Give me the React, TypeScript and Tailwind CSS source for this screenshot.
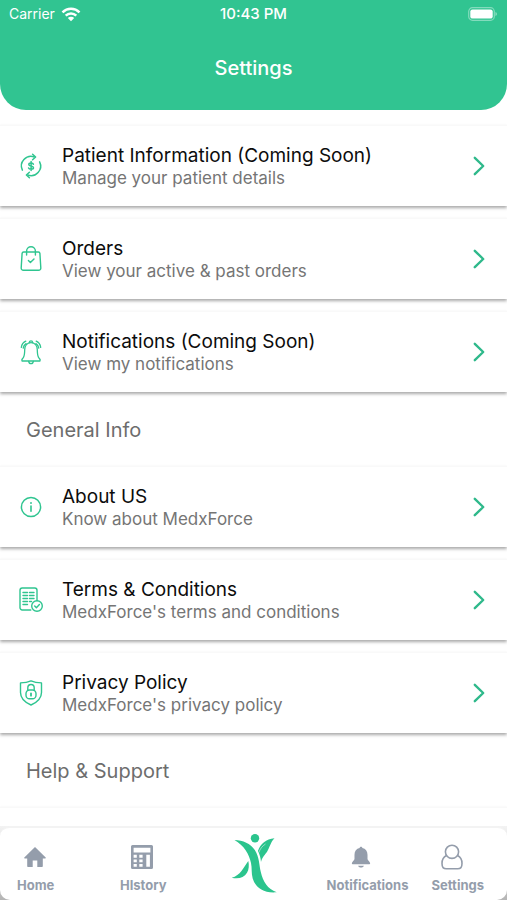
import React from 'react';

type IconProps = { className?: string };

const stroke = {
  fill: 'none',
  stroke: 'currentColor',
  strokeLinecap: 'round' as const,
  strokeLinejoin: 'round' as const,
};

const RefundIcon: React.FC<IconProps> = ({ className }) => (
  <svg viewBox="0 0 26 26" className={className} strokeWidth="1.5" {...stroke} aria-hidden="true">
    <path d="M4.4 17.2A9.6 9.6 0 0 1 16.4 4" />
    <path d="M14.6 1.2 17.6 4l-3 2.8" />
    <path d="M21.6 8.8A9.6 9.6 0 0 1 9.6 22" />
    <path d="M11.4 19.2 8.4 22l3 2.8" />
    <path d="M15.4 11.2c-.2-.8-1-1.300-2.300-1.300-1.400 0-2.300.5-2.300 1.500 0 2.300 4.700 1 4.700 3.300 0 1-.9 1.500-2.400 1.500-1.300 0-2.200-.4-2.500-1.300M13.100 8.600v8.900" />
  </svg>
);

const BagIcon: React.FC<IconProps> = ({ className }) => (
  <svg viewBox="0 0 26 26" className={className} strokeWidth="1.4" {...stroke} aria-hidden="true">
    <path d="M5.600 6h14.800c.9 0 1.400.5 1.500 1.300l.9 14.400c.1 1.600-.8 2.600-2.300 2.600H5.500c-1.500 0-2.400-1-2.300-2.600L4.100 7.300C4.200 6.500 4.700 6 5.600 6Z" />
    <path d="M8.600 9V5.200a4.400 4.400 0 0 1 8.800 0V9" />
    <path d="m10.400 14.600 2 2 3.600-3.700" />
  </svg>
);

const BellOutlineIcon: React.FC<IconProps> = ({ className }) => (
  <svg viewBox="0 0 26 26" className={className} strokeWidth="1.3" {...stroke} aria-hidden="true">
    <path d="M4 22c-.8-1.500.3-2 1.200-3.200C6.700 17 6.600 14.400 6.700 10.800 6.800 6.500 9.300 3.600 13 3.600s6.200 2.900 6.300 7.200c.1 3.600 0 6.200 1.500 8 .9 1.200 2 1.700 1.200 3.200Z" />
    <path d="M10.700 22.300c.2 1.500 1 2.300 2.300 2.300s2.100-.8 2.300-2.300M11.400 3.600c0-2.300 3.200-2.300 3.200 0" />
    <path d="M3.300 8.300C3.800 5.500 5.400 3.200 7.800 2.200M5.200 9.200c.3-2 1.300-3.700 2.900-4.600M22.700 8.300c-.5-2.800-2.100-5.100-4.500-6.100M20.800 9.200c-.3-2-1.300-3.700-2.900-4.600" />
  </svg>
);

const InfoIcon: React.FC<IconProps> = ({ className }) => (
  <svg viewBox="0 0 26 26" className={className} strokeWidth="1.5" {...stroke} aria-hidden="true">
    <circle cx="13" cy="13" r="9.600" />
    <path d="M13 12v5.300" strokeWidth="1.600" />
    <path d="M13 9v.1" strokeWidth="1.900" />
  </svg>
);

const TermsIcon: React.FC<IconProps> = ({ className }) => (
  <svg viewBox="0 0 26 26" className={className} strokeWidth="1.4" {...stroke} aria-hidden="true">
    <path d="M12.800 23H4.200A2.200 2.200 0 0 1 2 20.800V3.200A2.200 2.200 0 0 1 4.200 1h12.600A2.200 2.200 0 0 1 19 3.200v10.300" />
    <circle cx="19" cy="19" r="5.300" />
    <path d="m16.700 19.100 1.700 1.700 3-3.200" />
    <path d="M5 5.500h4.500M11.500 5.500H16M5 8.500h4.500M11.500 8.500H16M5 11.500h4.500M11.500 11.500H16M5 14.500h4.500M11.500 14.500h2M5 17.500h4.500" />
  </svg>
);

const ShieldIcon: React.FC<IconProps> = ({ className }) => (
  <svg viewBox="0 0 26 26" className={className} strokeWidth="1.4" {...stroke} aria-hidden="true">
    <path d="M13 .9c2.800 1.300 6.100 2 10.500 2v9.600c0 6-4.500 9.900-10.500 12.500C7 22.400 2.500 18.500 2.500 12.500V2.900c4.400 0 7.700-.7 10.500-2Z" />
    <path d="M9.800 10.200V7.700a3.200 3.200 0 0 1 6.400 0v2.500" />
    <rect x="8" y="10" width="10" height="8.800" rx="3.600" />
    <path d="M13 13.400v2.300" strokeWidth="1.800" />
  </svg>
);

const HomeIcon: React.FC<IconProps> = ({ className }) => (
  <svg viewBox="0 0 22 22" className={className} fill="currentColor" aria-hidden="true">
    <path d="M11 1 .3 11.500c-.3.4-.1.900.4.900h2.500V20c0 .6.400 1 1 1h4.500v-6.500h4.600V21h4.500c.6 0 1-.4 1-1v-7.600h2.500c.5 0 .7-.5.400-.9Z" />
  </svg>
);

const HistoryIcon: React.FC<IconProps> = ({ className }) => (
  <svg viewBox="0 0 24 26" className={className} fill="currentColor" aria-hidden="true">
    <path
      fillRule="evenodd"
      d="M2.500 1h19A1.500 1.500 0 0 1 23 2.500v21a1.500 1.500 0 0 1-1.500 1.500h-19A1.500 1.500 0 0 1 1 23.500v-21A1.500 1.500 0 0 1 2.500 1ZM3.600 3.800v4.700h16.800V3.800ZM3.600 10.800v3h3.200v-3ZM9.300 10.800v3h3.300v-3ZM3.600 15.500v2.800h3.200v-2.800ZM9.300 15.500v2.800h3.300v-2.800ZM3.600 20v2.700h3.200V20ZM9.300 20v2.700h3.300V20ZM16.300 10.800v11.900h3.600V10.800Z"
    />
  </svg>
);

const BellIcon: React.FC<IconProps> = ({ className }) => (
  <svg viewBox="0 0 24 24" className={className} fill="currentColor" aria-hidden="true">
    <path d="M12 .8c.9 0 1.500.6 1.500 1.500 3.500.8 5.600 3.500 5.600 7.200v4.800c0 1.400 2.900 3.200 2.900 4.700 0 .5-.3.800-.8.800H2.800c-.5 0-.8-.3-.8-.8 0-1.500 2.900-3.300 2.900-4.700V9.500c0-3.700 2.100-6.400 5.600-7.200 0-.9.600-1.500 1.500-1.500ZM8.800 21.500h6.400c-.4 1.300-1.600 2-3.200 2s-2.800-.7-3.200-2Z" />
  </svg>
);

const UserIcon: React.FC<IconProps> = ({ className }) => (
  <svg viewBox="0 0 22 26" className={className} strokeWidth="1.600" {...stroke} aria-hidden="true">
    <circle cx="11" cy="7.800" r="6.600" />
    <path d="M5.400 11.500C2.600 13 1 15.800 1 19.400c0 3.500 1.600 5.400 4.300 5.400h11.400c2.700 0 4.300-1.900 4.300-5.400 0-3.600-1.600-6.400-4.400-7.900" />
  </svg>
);

const Logo: React.FC<IconProps> = ({ className }) => (
  <svg viewBox="0 0 46 60" className={className} fill="#2bc48d" aria-hidden="true">
    <circle cx="24" cy="5.200" r="4.200" />
    <path d="M3.500 7C12 7.300 19.500 10.500 23.800 17c4.700 7 4.200 15 6 22C32 48.500 36.500 56 45.700 59.300 33 60.500 24.500 55 21.700 45.500c-1.500-5.200-.6-10.500-1.700-15.500C18.200 21 13 12.500 3.500 7Z" />
    <path d="M43.500 5.200C39.500 9 39 14 36.200 18.500c-2.200 3.500-4.700 5-6.200 10.500C29.700 25 28.700 21 26.900 18 29.500 10.500 35 6 43.500 5.200Z" />
    <path d="M27.900 19.500c1.200-3.700 3.300-6.300 6.600-8.500" stroke="#fff" strokeWidth=".5" fill="none" />
    <path d="M17.300 28c.9 4 .7 8.500-1.300 11.800-3 5-8.500 6.400-15.300 5C9.500 42.500 12.500 34.500 17.300 28Z" />
  </svg>
);

const WifiIcon: React.FC<IconProps> = ({ className }) => (
  <svg viewBox="0 0 20 15" className={className} fill="none" stroke="currentColor" strokeWidth="2.500" aria-hidden="true">
    <path d="M1.500 5.300a12.200 12.200 0 0 1 17 0M4.700 8.700a7.600 7.600 0 0 1 10.600 0" />
    <path d="M10 14.300 6.800 11a4.600 4.600 0 0 1 6.400 0Z" fill="currentColor" stroke="none" />
  </svg>
);

const BatteryIcon: React.FC<IconProps> = ({ className }) => (
  <svg viewBox="0 0 30 14" className={className} aria-hidden="true">
    <rect x=".7" y=".7" width="25.600" height="12.600" rx="3.800" fill="none" stroke="#fff" strokeOpacity=".4" strokeWidth="1.200" />
    <rect x="2.300" y="2.400" width="22.400" height="9.200" rx="2.200" fill="#fff" />
    <path d="M27.500 5v4c1.800-.7 1.800-3.300 0-4Z" fill="#fff" fillOpacity=".5" />
  </svg>
);

const ChevronIcon: React.FC<IconProps> = ({ className }) => (
  <svg viewBox="0 0 12 20" className={className} strokeWidth="2.400" {...stroke} aria-hidden="true">
    <path d="m1.800 1.800 8.400 8.200-8.400 8.200" />
  </svg>
);

interface Item {
  title: string;
  subtitle: string;
  icon: React.FC<IconProps>;
}

const accountItems: Item[] = [
  { title: 'Patient Information (Coming Soon)', subtitle: 'Manage your patient details', icon: RefundIcon },
  { title: 'Orders', subtitle: 'View your active & past orders', icon: BagIcon },
  { title: 'Notifications (Coming Soon)', subtitle: 'View my notifications', icon: BellOutlineIcon },
];

const generalItems: Item[] = [
  { title: 'About US', subtitle: 'Know about MedxForce', icon: InfoIcon },
  { title: 'Terms & Conditions', subtitle: "MedxForce's terms and conditions", icon: TermsIcon },
  { title: 'Privacy Policy', subtitle: "MedxForce's privacy policy", icon: ShieldIcon },
];

const cardStyle = 'border-t border-[#f9f9f9] bg-white shadow-[0_2px_3px_rgba(0,0,0,0.34)]';

const ItemList: React.FC<{ items: Item[] }> = ({ items }) => (
  <div className="flex flex-col gap-3">
    {items.map(({ title, subtitle, icon: Icon }) => (
      <button
        key={title}
        type="button"
        className={`flex w-full items-center pt-[18px] pr-[22px] pb-[18px] pl-[18px] text-left ${cardStyle}`}
      >
        <Icon className="size-[26px] shrink-0 text-[#2fc590]" />
        <span className="ml-[18px] flex min-w-0 flex-1 flex-col">
          <span className="text-[19px] leading-6 text-[#0c0c0c]">{title}</span>
          <span className="text-[17px] leading-5 text-[#757575]">{subtitle}</span>
        </span>
        <ChevronIcon className="h-5 w-3 shrink-0 text-[#2fb98b]" />
      </button>
    ))}
  </div>
);

const SectionTitle: React.FC<{ children: React.ReactNode }> = ({ children }) => (
  <h2 className="px-[26px] pt-6 pb-[22px] text-[20px] leading-7 text-[#6d6d6d]">{children}</h2>
);

const NavItem: React.FC<{ label: string; children: React.ReactNode }> = ({ label, children }) => (
  <a href="#" className="flex flex-col items-center gap-1 pt-[10px] text-[13px] leading-5 font-bold text-[#949dab]">
    {children}
    {label}
  </a>
);

export default function App() {
  return (
    <div className="flex h-screen flex-col overflow-hidden bg-white font-['Inter','Liberation_Sans',sans-serif]">
      <header className="shrink-0 rounded-b-[26px] bg-[#31c491] px-[9px] pb-7 text-white">
        <div className="grid grid-cols-3 items-center text-[14px] leading-7">
          <span className="flex items-center gap-[6px]">
            Carrier
            <WifiIcon className="h-[15px] w-5" />
          </span>
          <span className="text-center text-[15px] leading-7 font-medium">10:43 PM</span>
          <BatteryIcon className="h-[14px] w-[30px] justify-self-end" />
        </div>
        <h1 className="pt-[26px] text-center text-[20px] leading-7 font-medium">Settings</h1>
      </header>

      <main className="min-h-0 flex-1 overflow-y-auto pt-[15px] [scrollbar-width:none]">
        <ItemList items={accountItems} />
        <SectionTitle>General Info</SectionTitle>
        <ItemList items={generalItems} />
        <SectionTitle>Help &amp; Support</SectionTitle>
        <div className={`h-20 ${cardStyle}`} />
      </main>

      <div className="shrink-0 bg-linear-to-b from-[#f3f3f3] to-[#b5b5b5]">
        <nav className="grid grid-cols-[1fr_auto_1fr] rounded-[10px] border-t-2 border-[#f3f3f3] bg-white pt-[5px] pb-[5px]">
          <div className="flex justify-between pr-[64px] pl-[17px]">
            <NavItem label="Home">
              <span className="flex h-7 items-center pr-[2px]">
                <HomeIcon className="size-[22px]" />
              </span>
            </NavItem>
            <NavItem label="HIstory">
              <span className="flex h-7 items-center pr-[2px]">
                <HistoryIcon className="h-[26px] w-6" />
              </span>
            </NavItem>
          </div>
          <a href="#" aria-label="MedxForce">
            <Logo className="h-[60px] w-[46px]" />
          </a>
          <div className="flex justify-between pr-[23px] pl-[50px]">
            <NavItem label="Notifications">
              <span className="flex h-7 items-center pr-3">
                <BellIcon className="size-[22px]" />
              </span>
            </NavItem>
            <NavItem label="Settings">
              <span className="flex h-7 items-center pr-3">
                <UserIcon className="h-[26px] w-[22px]" />
              </span>
            </NavItem>
          </div>
        </nav>
      </div>
    </div>
  );
}
